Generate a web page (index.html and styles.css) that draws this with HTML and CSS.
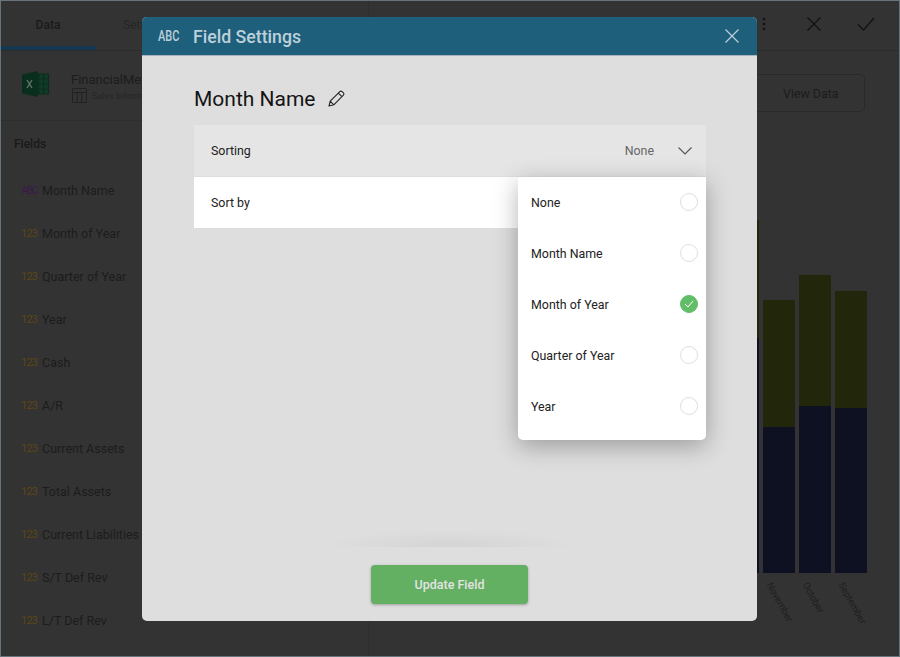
FILE: index.html
```html
<!DOCTYPE html>
<html lang="en">
<head>
  <meta charset="UTF-8">
  <title>Field Settings</title>
  <link rel="stylesheet" href="styles.css">
</head>
<body>
  <div class="app">
    <aside class="sidebar">
      <div class="tabs">
        <div class="tab active">Data</div>
        <div class="tab">Settings</div>
      </div>
      <div class="source">
        <svg class="excel-icon" width="28" height="26" viewBox="0 0 28 26">
          <path d="M12 3h14.5v20H12z" fill="#123a29" stroke="#0a2e1e" stroke-width="1.2"/>
          <path d="M17 3v20M21.5 3v20M12 8h14.5M12 13h14.5M12 18h14.5" stroke="#0a2e1e" stroke-width="1.1"/>
          <path d="M0 3.5 16 0v26L0 22.5z" fill="#0a2e1e"/>
          <path d="M5 9l5 8M10 9l-5 8" stroke="#5f7668" stroke-width="1.4"/>
        </svg>
        <div class="source-text">
          <div class="source-name">FinancialMetrics</div>
          <div class="source-sheet">
            <svg width="15" height="15" viewBox="0 0 15 15">
              <path d="M.5.5h14v14H.5zM.5 4.5h14M5.2 4.5v10M9.8 4.5v10" fill="none" stroke="#222" stroke-width="1"/>
            </svg>
            <span>Sales Information</span>
          </div>
        </div>
      </div>
      <div class="fields-title">Fields</div>
      <ul class="fields">
        <li><span class="type abc">ABC</span>Month Name</li>
        <li><span class="type">123</span>Month of Year</li>
        <li><span class="type">123</span>Quarter of Year</li>
        <li><span class="type">123</span>Year</li>
        <li><span class="type">123</span>Cash</li>
        <li><span class="type">123</span>A/R</li>
        <li><span class="type">123</span>Current Assets</li>
        <li><span class="type">123</span>Total Assets</li>
        <li><span class="type">123</span>Current Liabilities</li>
        <li><span class="type">123</span>S/T Def Rev</li>
        <li><span class="type">123</span>L/T Def Rev</li>
      </ul>
    </aside>

    <main class="main">
      <div class="toolbar">
        <svg class="tool-dots" width="4" height="14" viewBox="0 0 4 14"><circle cx="2" cy="2" r="1.3"/><circle cx="2" cy="7" r="1.3"/><circle cx="2" cy="12" r="1.3"/></svg>
        <svg class="tool-x" width="14" height="14" viewBox="0 0 14 14"><path d="M.5.5l13 13M13.5.5l-13 13" stroke="#111" stroke-width="1.2" fill="none"/></svg>
        <svg class="tool-check" width="18" height="14" viewBox="0 0 18 14"><path d="M1 7.5l5.5 5.5L17 1" stroke="#111" stroke-width="1.2" fill="none"/></svg>
      </div>
      <div class="actions">
        <div class="view-data">View Data</div>
      </div>
      <div class="chart">
        <div class="column">
          <div class="bar">
            <div class="seg-top seg-h-a"></div>
            <div class="seg-bottom seg-h-b"></div>
          </div>
        </div>
        <div class="column">
          <div class="bar">
            <div class="seg-top seg-h-c"></div>
            <div class="seg-bottom seg-h-d"></div>
          </div>
          <div class="bar-label">November</div>
        </div>
        <div class="column">
          <div class="bar">
            <div class="seg-top seg-h-e"></div>
            <div class="seg-bottom seg-h-f"></div>
          </div>
          <div class="bar-label">October</div>
        </div>
        <div class="column">
          <div class="bar">
            <div class="seg-top seg-h-g"></div>
            <div class="seg-bottom seg-h-h"></div>
          </div>
          <div class="bar-label">September</div>
        </div>
      </div>
    </main>
  </div>

  <div class="modal">
    <header class="modal-header">
      <span class="modal-type">ABC</span>
      <h2>Field Settings</h2>
      <svg class="modal-close" width="14" height="14" viewBox="0 0 14 14"><path d="M.5.5l13 13M13.5.5l-13 13" stroke="#bcd0da" stroke-width="1.2" fill="none"/></svg>
    </header>
    <div class="modal-body">
      <div class="field-name">
        <span>Month Name</span>
        <svg width="17" height="17" viewBox="0 0 17 17"><path d="M1 16l1.2-4.8L11.8 1.6a1.6 1.6 0 0 1 2.3 0l1.3 1.3a1.6 1.6 0 0 1 0 2.3L5.8 14.8zM2.2 11.2l3.6 3.6M10.3 3.1l3.6 3.6" fill="none" stroke="#222" stroke-width="1.1" stroke-linejoin="round"/></svg>
      </div>
      <div class="setting-row sorting">
        <span>Sorting</span>
        <span class="setting-value">None</span>
        <svg width="14" height="8" viewBox="0 0 14 8"><path d="M.5.5L7 7l6.5-6.5" stroke="#555" stroke-width="1.1" fill="none"/></svg>
      </div>
      <div class="setting-row sort-by">
        <span>Sort by</span>
      </div>
      <ul class="dropdown">
        <li>None<span class="radio"></span></li>
        <li>Month Name<span class="radio"></span></li>
        <li>Month of Year
          <span class="radio checked">
            <svg width="10" height="8" viewBox="0 0 10 8"><path d="M1 4l3 3 5-6" stroke="#fff" stroke-width="1" fill="none"/></svg>
          </span>
        </li>
        <li>Quarter of Year<span class="radio"></span></li>
        <li>Year<span class="radio"></span></li>
      </ul>
    </div>
    <footer class="modal-footer">
      <button type="button">Update Field</button>
    </footer>
  </div>
</body>
</html>
```

FILE: styles.css
```css
* {
  box-sizing: border-box;
  font-family: Roboto, "Liberation Sans", sans-serif;
}

html,
body {
  height: 100%;
}

body {
  margin: 0;
  background: #333;
  overflow: hidden;
}

.app {
  display: flex;
  height: 657px;
  background: #333;
  border: 1px solid #66747c;
  color: #141414;
}

/* left panel */
.sidebar {
  width: 368px;
  flex: none;
  border-right: 1px solid #2e2e2e;
}

.tabs {
  display: flex;
  height: 50px;
  border-bottom: 1px solid #2c2c2c;
}

.tab {
  width: 96px;
  padding: 17px 2px 0 0;
  text-align: center;
  font-size: 12px;
  font-weight: 500;
  color: #1a1a1a;
}

.tab + .tab {
  color: #262626;
  font-weight: 400;
  text-align: left;
  padding-left: 26px;
}

.tab.active {
  border-bottom: 4px solid #14384f;
}

.source {
  display: flex;
  align-items: center;
  gap: 21px;
  height: 70px;
  padding: 0 0 4px 21px;
  border-bottom: 1px solid #2e2e2e;
}

.source-text {
  padding-top: 8px;
}

.source-name {
  font-size: 13px;
  color: #1c1c1c;
}

.source-sheet {
  display: flex;
  align-items: center;
  gap: 5px;
  margin-top: 1px;
  padding-left: 1px;
  font-size: 9px;
  color: #262626;
}

.fields-title {
  padding: 16px 0 0 13px;
  font-size: 12px;
  font-weight: 500;
  color: #1a1a1a;
}

.fields {
  list-style: none;
  margin: 18px 0 0;
  padding: 0;
}

.fields li {
  display: flex;
  align-items: center;
  height: 43px;
  padding-left: 20px;
  font-size: 12.5px;
  color: #1c1c1c;
}

.type {
  width: 21px;
  flex: none;
  font-size: 11px;
  letter-spacing: -0.8px;
  color: #5c4514;
}

.type.abc {
  letter-spacing: -1.6px;
  color: #3a1a48;
}

/* chart area behind the dialog */
.main {
  flex: 1;
  display: flex;
  flex-direction: column;
}

.toolbar {
  display: flex;
  align-items: center;
  justify-content: flex-end;
  height: 50px;
  padding: 0 24px 3px 0;
  gap: 36px;
  border-bottom: 1px solid #2c2c2c;
  fill: #111;
}

.toolbar .tool-dots {
  margin-right: 5px;
}

.actions {
  display: flex;
  justify-content: flex-end;
  padding: 23px 34px 0 0;
}

.view-data {
  width: 120px;
  height: 38px;
  line-height: 37px;
  padding-left: 37px;
  border: 1px solid #2a2a2a;
  border-radius: 5px;
  font-size: 12.4px;
  color: #1c1c1c;
}

.chart {
  flex: 1;
  display: flex;
  justify-content: flex-end;
  gap: 4px;
  padding: 0 32px 0 0;
}

.column {
  width: 32px;
  position: relative;
}

.bar {
  height: 461px;
  display: flex;
  flex-direction: column;
  justify-content: flex-end;
}

.seg-top {
  background: #22260b;
}

.seg-bottom {
  background: #0d1122;
}

.seg-h-a { height: 118px; }
.seg-h-b { height: 235px; }
.seg-h-c { height: 127px; }
.seg-h-d { height: 146px; }
.seg-h-e { height: 131px; }
.seg-h-f { height: 167px; }
.seg-h-g { height: 117px; }
.seg-h-h { height: 165px; }

.bar-label {
  position: absolute;
  top: 471px;
  left: 6px;
  font-size: 9.5px;
  color: #1e1e1e;
  white-space: nowrap;
  transform-origin: 0 0;
  transform: rotate(61deg) translateY(-6px);
}

/* dialog */
.modal {
  position: absolute;
  left: 142px;
  top: 17px;
  width: 615px;
  height: 604px;
  display: flex;
  flex-direction: column;
  background: #dedede;
  border-radius: 5px;
  overflow: hidden;
}

.modal-header {
  display: flex;
  align-items: center;
  flex: none;
  height: 39px;
  padding: 0 18px 0 16px;
  background: #1e5f7c;
  border-bottom: 1px solid #a9b4ba;
  color: #bcd0da;
}

.modal-type {
  width: 35px;
  flex: none;
  font-size: 14px;
  font-weight: 500;
  transform: scaleX(0.78);
  transform-origin: 0 50%;
}

.modal-header h2 {
  flex: 1;
  margin: 0;
  padding-top: 1px;
  font-size: 17.7px;
  font-weight: 500;
}

.modal-body {
  flex: 1;
  position: relative;
  padding: 0 51px 0 52px;
}

.field-name {
  display: flex;
  align-items: center;
  gap: 12px;
  height: 69px;
  padding-top: 16px;
  font-size: 21px;
  color: #141414;
}

.setting-row {
  display: flex;
  align-items: center;
  height: 51px;
  padding: 0 14px 0 17px;
  font-size: 12.4px;
  color: #222;
}

.sorting {
  background: #e5e5e5;
  margin-bottom: 1px;
}

.sorting > span:first-child {
  flex: 1;
}

.setting-value {
  margin-right: 24px;
  color: #666;
}

.sort-by {
  background: #fff;
}

.dropdown {
  position: absolute;
  left: 376px;
  top: 121px;
  width: 188px;
  height: 263px;
  list-style: none;
  margin: 0;
  padding: 0;
  background: #fff;
  border-radius: 0 0 5px 5px;
  box-shadow: 0 6px 24px rgba(0, 0, 0, 0.3);
}

.dropdown li {
  display: flex;
  align-items: center;
  justify-content: space-between;
  height: 51px;
  padding: 0 8px 0 13px;
  font-size: 12.4px;
  color: #222;
}

.radio {
  display: flex;
  align-items: center;
  justify-content: center;
  width: 18px;
  height: 18px;
  margin-bottom: 2px;
  border: 1px solid #dfdfdf;
  border-radius: 50%;
}

.radio.checked {
  background: #62bd69;
  border-color: #62bd69;
}

.modal-footer {
  flex: none;
  height: 74px;
  display: flex;
  justify-content: center;
  padding-top: 18px;
  position: relative;
}

.modal-footer::before {
  content: "";
  position: absolute;
  left: 180px;
  right: 180px;
  top: -18px;
  height: 18px;
  background: radial-gradient(ellipse 50% 100% at 50% 100%, #d4d4d4, transparent);
}

.modal-footer button {
  width: 157px;
  height: 39px;
  background: #63b063;
  color: #e3e3e3;
  border: none;
  border-radius: 4px;
  box-shadow: 0 1px 3px rgba(0, 0, 0, 0.3);
  font-size: 12.5px;
  font-weight: 500;
}
```
